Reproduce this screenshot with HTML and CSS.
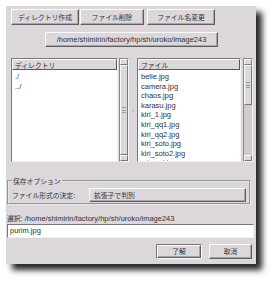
FILE: index.html
```html
<!DOCTYPE html>
<html lang="ja">
<head>
<meta charset="utf-8">
<link rel="stylesheet" href="styles.css">
</head>
<body>
<div class="dialog">
  <div class="toolbar">
    <div class="btn b1 ja">ディレクトリ作成</div>
    <div class="btn b2 ja">ファイル削除</div>
    <div class="btn b3 ja">ファイル名変更</div>
  </div>
  <div class="pathrow">
    <div class="btn path">/home/shimirin/factory/hp/sh/uroko/image243</div>
  </div>
  <div class="lists">
    <div class="pane pane-left">
      <div class="list">
        <div class="hdr ja">ディレクトリ</div>
        <ul class="items">
          <li>./</li>
          <li>../</li>
        </ul>
      </div>
      <div class="sb">
        <div class="arrow"></div>
        <div class="trough"><div class="slider full"><span class="grip"></span></div></div>
        <div class="arrow"></div>
      </div>
    </div>
    <div class="handle">‹</div>
    <div class="pane pane-right">
      <div class="list">
        <div class="hdr ja">ファイル</div>
        <ul class="items">
          <li>belle.jpg</li>
          <li>camera.jpg</li>
          <li>chaos.jpg</li>
          <li>karasu.jpg</li>
          <li>kiri_1.jpg</li>
          <li>kiri_qq1.jpg</li>
          <li>kiri_qq2.jpg</li>
          <li>kiri_soto.jpg</li>
          <li>kiri_soto2.jpg</li>
          <li>misumi.jpg</li>
        </ul>
      </div>
      <div class="sb">
        <div class="arrow"></div>
        <div class="trough"><div class="slider part"><span class="grip"></span></div></div>
        <div class="arrow"></div>
      </div>
    </div>
  </div>
  <fieldset class="frame">
    <legend class="ja">保存オプション</legend>
    <div class="optrow">
      <span class="optlabel ja">ファイル形式の決定:</span>
      <div class="btn combo ja">拡張子で判別</div>
    </div>
  </fieldset>
  <div class="selection"><span class="ja">選択</span>: /home/shimirin/factory/hp/sh/uroko/image243</div>
  <div class="entry">purim.jpg</div>
  <div class="actions">
    <div class="default"><div class="btn ok ja">了解</div></div>
    <div class="btn cancel ja">取消</div>
  </div>
</div>
</body>
</html>
```

FILE: styles.css
```css
* { box-sizing: border-box; }
html, body { margin: 0; padding: 0; background: #ffffff; }
body {
  font-family: "Liberation Sans", "Noto Sans CJK JP", sans-serif;
  font-size: 7.5px;
  color: #333133;
  width: 280px;
  height: 288px;
  overflow: hidden;
}
.ja { font-family: "Noto Sans CJK JP", sans-serif; font-size: 6.8px; }

.dialog {
  margin: 6px 0 0 6px;
  width: 250px;
  height: 258px;
  background: #dbd7db;
  box-shadow: 6px 6px 6px rgba(15, 15, 15, 0.9);
  display: flex;
  flex-direction: column;
}

.btn {
  background: #dbd7db;
  border: 1px solid;
  border-color: #fbfafb #605c60 #605c60 #fbfafb;
  box-shadow: inset -1px -1px 0 #a8a4a8;
  display: flex;
  align-items: center;
  justify-content: center;
  white-space: nowrap;
  line-height: 1;
}

.toolbar {
  display: flex;
  margin: 3px 0 0 5px;
  height: 16px;
}
.b1 { width: 68px; }
.b2 { width: 64px; margin-left: 1px; }
.b3 { width: 68px; margin-left: 3px; }

.pathrow {
  margin: 7px 0 0 39px;
  height: 15px;
  display: flex;
}
.path { width: 173px; }

.lists {
  margin: 11px 0 0 5px;
  height: 104px;
  display: flex;
}
.pane { display: flex; }
.pane-left { width: 118px; }
.pane-right { width: 116px; }
.handle {
  width: 8px;
  display: flex;
  align-items: center;
  justify-content: center;
  color: #a09ca0;
  font-size: 6px;
}
.list {
  flex: 1;
  background: #ffffff;
  border: 1px solid;
  border-color: #7a767a #f4f2f4 #f4f2f4 #7a767a;
  overflow: hidden;
  display: flex;
  flex-direction: column;
}
.hdr {
  height: 11px;
  background: #dbd7db;
  border: 1px solid;
  border-color: #fbfafb #5a565a #5a565a #fbfafb;
  padding-left: 2px;
  display: flex;
  align-items: center;
  flex: none;
}
.items {
  list-style: none;
  margin: 0;
  padding: 2px 0 0 3px;
  color: #333133;
}
.items li {
  height: 9.6px;
  line-height: 9.6px;
}

.sb {
  width: 10px;
  margin-left: 1px;
  display: flex;
  flex-direction: column;
  background: #cfcbcf;
  border: 1px solid;
  border-color: #8a868a #f4f2f4 #f4f2f4 #8a868a;
}
.pane-right .sb { margin-left: 2px; }
.arrow {
  height: 6px;
  flex: none;
  background: #dbd7db;
  border: 1px solid;
  border-color: #fbfafb #7a767a #7a767a #fbfafb;
}
.trough { flex: 1; display: flex; flex-direction: column; }
.slider {
  background: #dbd7db;
  border: 1px solid;
  border-color: #fbfafb #7a767a #7a767a #fbfafb;
  display: flex;
  align-items: center;
  justify-content: center;
}
.slider.full { flex: 1; }
.slider.part { height: 40px; }
.grip {
  width: 4px;
  height: 6px;
  border-top: 1px solid #9a969a;
  border-bottom: 1px solid #9a969a;
  background: linear-gradient(#9a969a, #9a969a) center / 4px 1px no-repeat;
}

.frame {
  margin: 15px 0 0 1px;
  width: 244px;
  padding: 3px 3px 1px 3px;
  border: 2px groove #e8e6e8;
  min-width: 0;
}
.frame legend {
  padding: 0 1px;
  margin-left: 0;
  line-height: 8px;
  color: #3a383a;
}
.optrow {
  display: flex;
  align-items: center;
  height: 14px;
}
.optlabel { width: 78px; }
.combo {
  width: 159px;
  height: 14px;
  justify-content: flex-start;
  padding-left: 4px;
}

.selection {
  margin: 9px 0 0 1px;
  height: 9px;
  line-height: 9px;
  white-space: nowrap;
}
.entry {
  margin: 1px 0 0 1px;
  width: 247px;
  height: 14px;
  background: #ffffff;
  border: 1px solid;
  border-color: #7a767a #f4f2f4 #f4f2f4 #7a767a;
  padding-left: 2px;
  line-height: 12px;
}
.actions {
  margin: 6px 0 0 150px;
  display: flex;
  height: 15px;
}
.default {
  width: 46px;
  height: 15px;
  border: 1px solid;
  border-color: #7a767a #fbfafb #fbfafb #7a767a;
  display: flex;
}
.ok { flex: 1; }
.cancel { width: 43px; margin-left: 7px; }
```
